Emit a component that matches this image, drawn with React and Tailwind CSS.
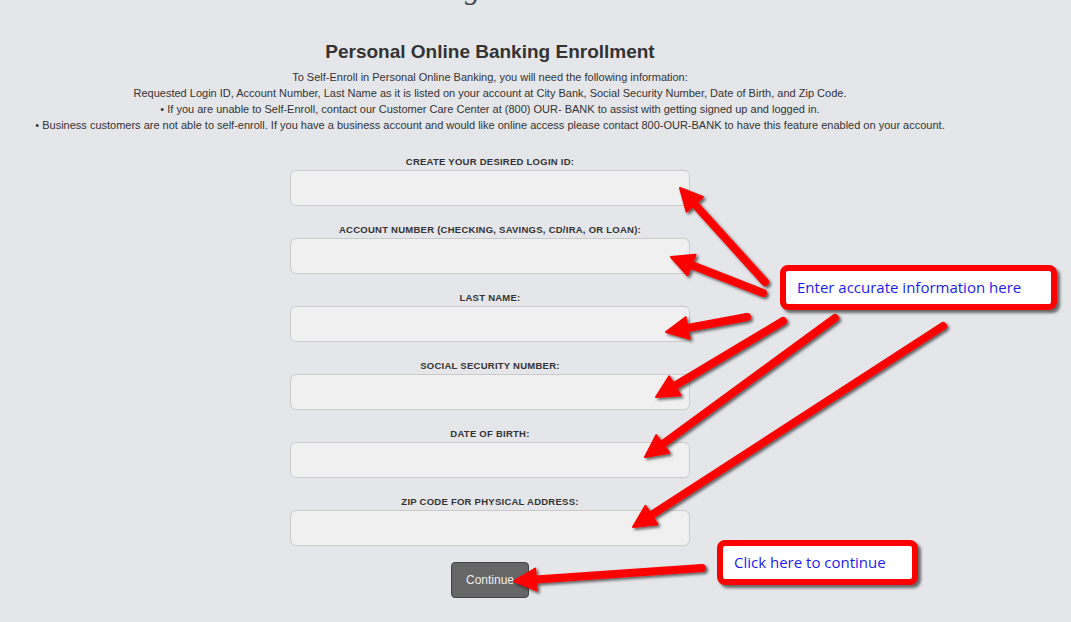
import { useId } from 'react'

const fields = [
  'Create your desired Login ID:',
  'Account Number (Checking, Savings, CD/IRA, or Loan):',
  'Last Name:',
  'Social Security Number:',
  'Date of Birth:',
  'Zip Code for Physical Address:',
]

const arrows = [
  { from: [765, 282], to: [680, 188] },
  { from: [763, 293], to: [671, 257] },
  { from: [747, 317], to: [666, 332] },
  { from: [783, 321], to: [656, 397] },
  { from: [835, 318], to: [645, 457] },
  { from: [943, 326], to: [633, 527] },
  { from: [702, 568], to: [514, 581] },
]

// line + triangle head, head points computed from the direction
const Arrow = ({ from, to }) => {
  const [x1, y1] = from
  const [x2, y2] = to
  const dx = x2 - x1
  const dy = y2 - y1
  const len = Math.hypot(dx, dy)
  const ux = dx / len
  const uy = dy / len
  const headLen = 22
  const headW = 11
  const bx = x2 - ux * headLen
  const by = y2 - uy * headLen
  const p1 = [bx - uy * headW, by + ux * headW]
  const p2 = [bx + uy * headW, by - ux * headW]
  return (
    <g>
      <line x1={x1} y1={y1} x2={bx + ux * 4} y2={by + uy * 4} stroke="#ff0000" strokeWidth="8" strokeLinecap="round" />
      <polygon points={`${x2},${y2} ${p1[0]},${p1[1]} ${p2[0]},${p2[1]}`} fill="#ff0000" stroke="#ff0000" strokeWidth="2" strokeLinejoin="round" />
    </g>
  )
}

const Callout = ({ className, children }) => (
  <div className={`absolute flex items-center bg-white border-[6px] border-[#ff0000] rounded-[8px] shadow-[3px_3px_3px_rgba(0,0,0,0.55)] ${className}`}>
    <span className="text-[15px] text-[#1c1cf0] leading-none" style={{ fontFamily: '"Open Sans", "Noto Sans", sans-serif' }}>{children}</span>
  </div>
)

export default function App() {
  const shadowId = useId().replace(/:/g, '')

  return (
    <div className="relative w-[1071px] h-[622px] overflow-hidden bg-[#e5e6ea] text-[#333]" style={{ fontFamily: '"Liberation Sans", Arial, sans-serif' }}>
      {/* logo descender peeking in from above */}
      <div className="h-[6px] overflow-hidden">
        <span className="block ml-[465px] -mt-[26px] text-[30px] leading-[30px] italic text-[#444]" style={{ fontFamily: '"Liberation Serif", serif' }}>g</span>
      </div>

      <div className="w-[980px] text-center">
        <h1 className="mt-[35px] text-[19px] leading-[22px] font-bold text-[#333]">Personal Online Banking Enrollment</h1>
        <div className="mt-[6px] text-[11px] leading-[16px] text-[#333]">
          <p>To Self-Enroll in Personal Online Banking, you will need the following information:</p>
          <p>Requested Login ID, Account Number, Last Name as it is listed on your account at City Bank, Social Security Number, Date of Birth, and Zip Code.</p>
          <p>• If you are unable to Self-Enroll, contact our Customer Care Center at (800) OUR- BANK to assist with getting signed up and logged in.</p>
          <p>• Business customers are not able to self-enroll. If you have a business account and would like online access please contact 800-OUR-BANK to have this feature enabled on your account.</p>
        </div>

        <form className="mt-[23px] flex flex-col items-center gap-[18px]">
          {fields.map((label) => (
            <div key={label} className="flex flex-col items-center gap-[2px]">
              <label className="text-[9.5px] leading-[12px] font-bold uppercase tracking-[0.25px] text-[#333]">{label}</label>
              <input className="w-[400px] h-[36px] bg-[#f0f0f0] border border-[#cacaca] rounded-[6px] outline-none" />
            </div>
          ))}
          <button type="button" className="-mt-[2px] w-[78px] h-[36px] bg-[#666] border border-[#444] rounded-[4px] text-[12px] text-[#eee]">
            Continue
          </button>
        </form>
      </div>

      <svg className="absolute inset-0 pointer-events-none" width="1071" height="622">
        <defs>
          <filter id={shadowId} x="-20%" y="-20%" width="140%" height="140%">
            <feDropShadow dx="2" dy="2" stdDeviation="1.4" floodColor="#000" floodOpacity="0.6" />
          </filter>
        </defs>
        <g filter={`url(#${shadowId})`}>
          {arrows.map((a, i) => (
            <Arrow key={i} {...a} />
          ))}
        </g>
      </svg>

      <Callout className="left-[780px] top-[265px] w-[277px] h-[45px] pl-[11px]">Enter accurate information here</Callout>
      <Callout className="left-[717px] top-[540px] w-[201px] h-[45px] pl-[11px]">Click here to continue</Callout>
    </div>
  )
}
